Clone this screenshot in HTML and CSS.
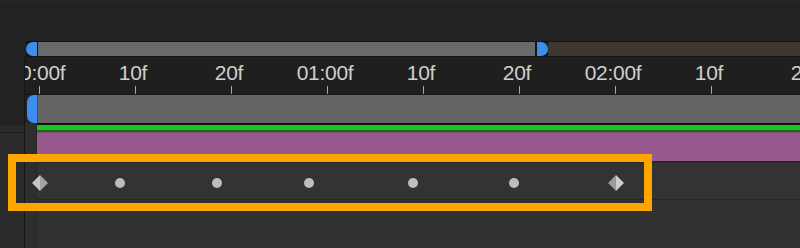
FILE: index.html
```html
<!DOCTYPE html>
<html>
<head>
<meta charset="utf-8">
<link rel="stylesheet" href="styles.css">
</head>
<body>
<div class="app">
  <div class="top"></div>

  <div class="range">
    <div class="range-lead"></div>
    <div class="rh rh-left"></div>
    <div class="range-bar"></div>
    <div class="range-gap"></div>
    <div class="rh rh-right"></div>
    <div class="range-rest"></div>
  </div>

  <div class="row ruler-row">
    <div class="gut gut-dark"></div>
    <div class="vdiv"></div>
    <div class="ruler">
      <div class="cell first"><span class="lbl">00:00f</span><span class="tick"></span></div>
      <div class="cell"><span class="lbl">10f</span><span class="tick"></span></div>
      <div class="cell"><span class="lbl">20f</span><span class="tick"></span></div>
      <div class="cell"><span class="lbl">01:00f</span><span class="tick"></span></div>
      <div class="cell"><span class="lbl">10f</span><span class="tick"></span></div>
      <div class="cell"><span class="lbl">20f</span><span class="tick"></span></div>
      <div class="cell"><span class="lbl">02:00f</span><span class="tick"></span></div>
      <div class="cell"><span class="lbl">10f</span><span class="tick"></span></div>
      <div class="cell"><span class="lbl">20f</span><span class="tick"></span></div>
    </div>
  </div>

  <div class="row clip-row">
    <div class="gut gut-dark"></div>
    <div class="vdiv"></div>
    <div class="clip-lead"></div>
    <div class="clip-handle"></div>
    <div class="clip-bar"></div>
  </div>

  <div class="row hline-row">
    <div class="gut gut-dark"></div>
    <div class="vdiv"></div>
    <div class="sub"></div>
    <div class="main hline-black"></div>
  </div>

  <div class="row green-row">
    <div class="gut"></div>
    <div class="vdiv"></div>
    <div class="sub"></div>
    <div class="main green"></div>
  </div>

  <div class="row dgreen-row">
    <div class="gut"></div>
    <div class="vdiv"></div>
    <div class="sub"></div>
    <div class="main dgreen"></div>
  </div>

  <div class="row purple-row">
    <div class="gut gut-line"></div>
    <div class="vdiv"></div>
    <div class="sub"></div>
    <div class="main purple"></div>
  </div>

  <div class="row sep-row">
    <div class="gut"></div>
    <div class="vdiv"></div>
    <div class="sub"></div>
    <div class="main sep"></div>
  </div>

  <div class="row key-row">
    <div class="gut"></div>
    <div class="vdiv"></div>
    <div class="sub"></div>
    <div class="main keytrack"></div>
    <div class="keys">
      <svg class="key diamond" style="left:32px" width="16" height="16" viewBox="0 0 16 16"><polygon points="8,0 0,8 8,16" fill="#c6c6c6"/><polygon points="8,0 16,8 8,16" fill="#a4a4a4"/></svg>
      <span class="key dot" style="left:115px"></span>
      <span class="key dot" style="left:212px"></span>
      <span class="key dot" style="left:304px"></span>
      <span class="key dot" style="left:408px"></span>
      <span class="key dot" style="left:509px"></span>
      <svg class="key diamond" style="left:608px" width="16" height="16" viewBox="0 0 16 16"><polygon points="8,0 0,8 8,16" fill="#9a9a9a"/><polygon points="8,0 16,8 8,16" fill="#cccccc"/></svg>
    </div>
  </div>

  <div class="row hline-row2">
    <div class="gut"></div>
    <div class="vdiv"></div>
    <div class="sub"></div>
    <div class="main sep2"></div>
  </div>

  <div class="row rest-row">
    <div class="gut"></div>
    <div class="vdiv"></div>
    <div class="sub"></div>
    <div class="main rest"></div>
  </div>

  <div class="selection"></div>
</div>
</body>
</html>
```

FILE: styles.css
```css
* { box-sizing: border-box; }
html, body { margin: 0; padding: 0; background: #222222; }
.app {
  position: relative;
  width: 800px;
  height: 248px;
  overflow: hidden;
  display: flex;
  flex-direction: column;
  background: #222222;
  font-family: "Liberation Sans", Arial, sans-serif;
}
.top { height: 41px; background: #222222; border-top: 2px solid #262626; }

/* range bar */
.range { height: 16px; display: flex; align-items: center; background: #141414; }
.range-lead { width: 26px; height: 16px; background: #222222; }
.rh { width: 11px; height: 14px; background: #3b8eea; }
.rh-left { border-radius: 7px 0 0 7px; }
.rh-right { border-radius: 0 7px 7px 0; }
.range-bar { width: 497px; height: 14px; margin-left: 1px; background: #6a6a6a; }
.range-gap { width: 2px; height: 14px; }
.range-rest { flex: 1; height: 14px; background: #3d3731; }

/* generic rows */
.row { display: flex; position: relative; }
.gut { width: 24px; background: #2a2a2a; }
.gut-dark { background: #222222; }
.gut-line { border-top: 1px solid #1d1d1d; }
.vdiv { width: 1px; background: #161616; }
.sub { width: 12px; background: #2e2e2e; border-right: 1px solid #262626; }
.main { flex: 1; }

/* ruler */
.ruler-row { height: 38px; }
.ruler {
  flex: 1;
  display: flex;
  overflow: hidden;
  background: #1f1f1f;
  border-bottom: 1px solid #181818;
}
.cell {
  flex: 0 0 96px;
  display: flex;
  flex-direction: column;
  align-items: center;
  padding-top: 5px;
}
.cell.first { margin-left: -36px; }
.lbl {
  height: 21px;
  line-height: 21px;
  font-size: 21px;
  color: #cfcfcf;
  white-space: nowrap;
  letter-spacing: -0.3px;
}
.tick {
  align-self: flex-start;
  margin-left: 50px;
  margin-top: 3px;
  width: 1px;
  height: 9px;
  background: #a8a8a8;
}

/* clip row */
.clip-row { height: 28px; }
.clip-lead { width: 2px; background: #222222; }
.clip-handle { width: 10px; background: #3b8eea; border-radius: 7px 0 0 7px; }
.clip-bar { flex: 1; background: #656565; border-left: 1px solid #4a4a4a; }

.hline-row { height: 2px; }
.hline-black { background: #121212; }

.green-row { height: 5px; }
.green { background: #1fc21f; }
.dgreen-row { height: 2px; }
.dgreen { background: #1b6a1f; }

.purple-row { height: 29px; }
.purple { background: #985a8c; border-top: 1px solid #7c4a73; }

.sep-row { height: 2px; }
.sep { background: #272727; }

.key-row { height: 36px; }
.keytrack { background: #333333; }
.keys { position: absolute; left: 0; top: 0; width: 800px; height: 36px; }
.key { position: absolute; }
.diamond { top: 12px; }
.dot {
  top: 15px;
  width: 10px;
  height: 10px;
  border-radius: 50%;
  background: #bdbdbd;
}

.hline-row2 { height: 1px; }
.sep2 { background: #252525; }

.rest-row { flex: 1; }
.rest { background: #313131; }

/* selection overlay */
.selection {
  position: absolute;
  left: 8px;
  top: 154px;
  width: 644px;
  height: 57px;
  border: 8px solid #fea500;
}
```
